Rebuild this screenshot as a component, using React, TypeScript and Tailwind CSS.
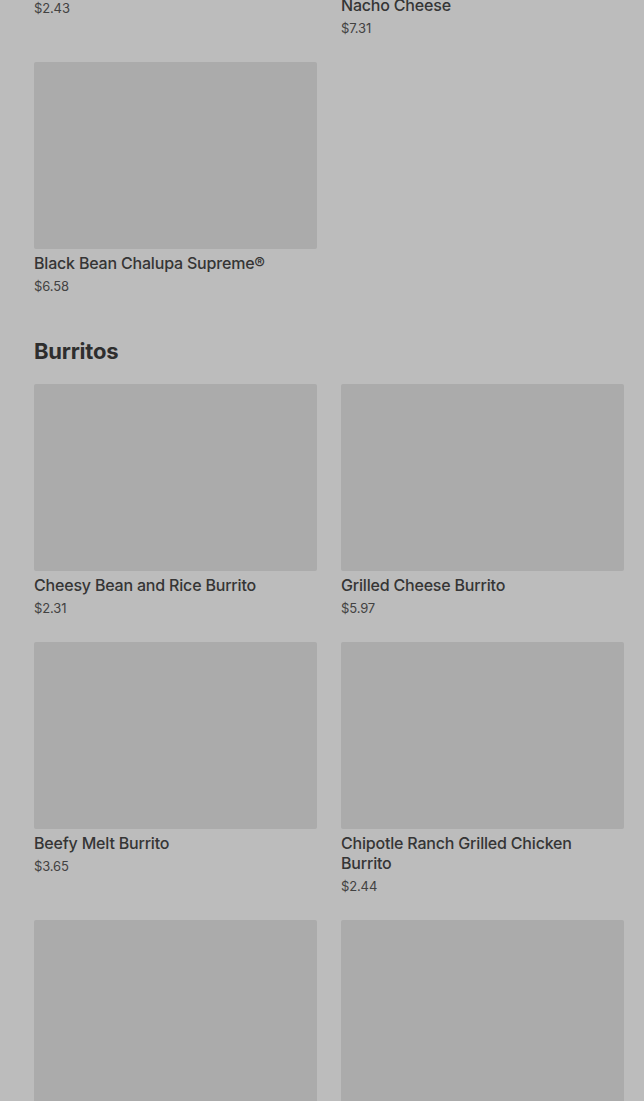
import React from "react";

type Item = { name: string; price: string };

type Section = { title?: string; items: Item[] };

const sections: Section[] = [
  {
    items: [
      { name: "Crunchy Taco Supreme®", price: "$2.43" },
      { name: "Nachos BellGrande® with Extra Nacho Cheese", price: "$7.31" },
      { name: "Black Bean Chalupa Supreme®", price: "$6.58" },
    ],
  },
  {
    title: "Burritos",
    items: [
      { name: "Cheesy Bean and Rice Burrito", price: "$2.31" },
      { name: "Grilled Cheese Burrito", price: "$5.97" },
      { name: "Beefy Melt Burrito", price: "$3.65" },
      { name: "Chipotle Ranch Grilled Chicken Burrito", price: "$2.44" },
      { name: "Bean Burrito", price: "$2.19" },
      { name: "Beefy 5-Layer Burrito", price: "$4.29" },
    ],
  },
];

function MenuCard({ item }: { item: Item }) {
  return (
    <div className="flex flex-col">
      <div className="h-[187px] w-full rounded-[2px] bg-[#ababab]" />
      <div className="mt-1 text-[16px] font-medium leading-[20px] tracking-[-0.012em] text-[#353535]">
        {item.name}
      </div>
      <div className="mt-[3px] text-[13px] leading-[20px] tracking-[-0.01em] text-[#424242]">
        {item.price}
      </div>
    </div>
  );
}

export default function App() {
  return (
    <div
      className="h-[1101px] w-[644px] overflow-hidden bg-[#bcbcbc]"
      style={{ fontFamily: "Inter, 'Noto Sans', sans-serif" }}
    >
      <div className="mt-[-216px] pl-[34px] pr-[20px]">
        {sections.map((section, i) => (
          <div key={i} className={i > 0 ? "mt-[41px]" : ""}>
            {section.title && (
              <h2 className="mb-[19px] text-[22px] font-bold leading-[28px] tracking-[-0.01em] text-[#2e2e2e]">
                {section.title}
              </h2>
            )}
            <div className="grid grid-cols-2 items-start gap-x-6 gap-y-6">
              {section.items.map((item) => (
                <MenuCard key={item.name} item={item} />
              ))}
            </div>
          </div>
        ))}
      </div>
    </div>
  );
}
